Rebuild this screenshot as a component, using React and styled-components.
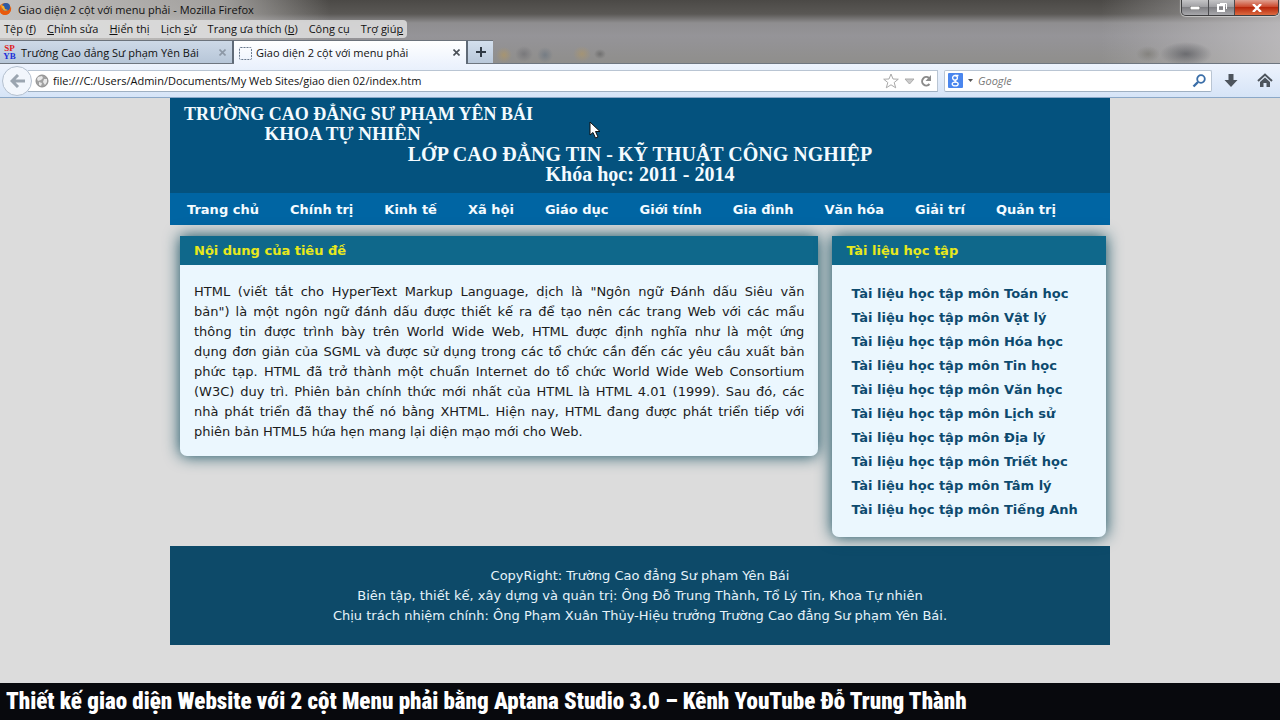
import React, { useState } from "react";
import styled, { createGlobalStyle } from "styled-components";

const MENUS = [
  { before: "Tệp (", key: "f", after: ")" },
  { before: "", key: "C", after: "hỉnh sửa" },
  { before: "", key: "H", after: "iển thị" },
  { before: "Lịch ", key: "s", after: "ử" },
  { before: "Trang ưa thích (", key: "b", after: ")" },
  { before: "Công cụ", key: "", after: "" },
  { before: "Trợ giú", key: "p", after: "" },
];

const NAV_ITEMS = [
  "Trang chủ",
  "Chính trị",
  "Kinh tế",
  "Xã hội",
  "Giáo dục",
  "Giới tính",
  "Gia đình",
  "Văn hóa",
  "Giải trí",
  "Quản trị",
];

const ARTICLE_LINES = [
  'HTML (viết tắt cho HyperText Markup Language, dịch là "Ngôn ngữ Đánh dấu Siêu văn',
  'bản") là một ngôn ngữ đánh dấu được thiết kế ra để tạo nên các trang Web với các mẩu',
  "thông tin được trình bày trên World Wide Web, HTML được định nghĩa như là một ứng",
  "dụng đơn giản của SGML và được sử dụng trong các tổ chức cần đến các yêu cầu xuất bản",
  "phức tạp. HTML đã trở thành một chuẩn Internet do tổ chức World Wide Web Consortium",
  "(W3C) duy trì. Phiên bản chính thức mới nhất của HTML là HTML 4.01 (1999). Sau đó, các",
  "nhà phát triển đã thay thế nó bằng XHTML. Hiện nay, HTML đang được phát triển tiếp với",
  "phiên bản HTML5 hứa hẹn mang lại diện mạo mới cho Web.",
];

const SUBJECTS = [
  "Toán học",
  "Vật lý",
  "Hóa học",
  "Tin học",
  "Văn học",
  "Lịch sử",
  "Địa lý",
  "Triết học",
  "Tâm lý",
  "Tiếng Anh",
];

const GlobalStyle = createGlobalStyle`
  * {
    box-sizing: border-box;
  }
  body {
    margin: 0;
    background: #dcdcdc;
  }
  button,
  input {
    font: inherit;
    color: inherit;
  }
`;

const Window = styled.div`
  display: flex;
  flex-direction: column;
  min-height: 100vh;
`;

// ---------- browser chrome ----------

const Chrome = styled.header`
  font-family: "Open Sans", "Noto Sans", sans-serif;
  font-size: 11px;
  color: #111;
  background:
    radial-gradient(ellipse 26px 12px at 1186px 54px, rgba(70, 72, 78, 0.6), transparent),
    radial-gradient(ellipse 12px 8px at 1148px 54px, rgba(110, 108, 100, 0.5), transparent),
    radial-gradient(ellipse 8px 8px at 504px 55px, rgba(176, 150, 100, 0.7), transparent),
    radial-gradient(ellipse 9px 8px at 524px 54px, rgba(105, 105, 110, 0.6), transparent),
    radial-gradient(ellipse 8px 8px at 545px 55px, rgba(100, 112, 125, 0.6), transparent),
    radial-gradient(ellipse 9px 8px at 582px 54px, rgba(176, 150, 100, 0.6), transparent),
    radial-gradient(ellipse 6px 5px at 600px 54px, rgba(90, 90, 90, 0.6), transparent),
    linear-gradient(90deg, #c2c0be 0, rgba(190, 188, 186, 0.75) 220px, transparent 330px, transparent 86%, rgba(200, 198, 200, 0.7) 100%),
    linear-gradient(180deg, #4b4946 0, #5a5855 14px, #8f8e90 23px, #959498 36px, #8f8e8c 63px);
`;

const TitleBar = styled.div`
  display: flex;
  align-items: flex-start;
  justify-content: space-between;
  height: 20px;
`;

const WindowTitle = styled.div`
  display: flex;
  align-items: center;
  gap: 6px;
  height: 18px;
`;

const WindowButtons = styled.div`
  display: flex;
  margin-right: 1px;
  border: 1px solid #3e3e40;
  border-top: 0;
  border-radius: 0 0 5px 5px;
  box-shadow: 0 0 1px 1px rgba(255, 255, 255, 0.5);
  overflow: hidden;
`;

const WindowButton = styled.button`
  display: flex;
  align-items: center;
  justify-content: center;
  width: ${(props) => (props.$close ? "44px" : "26px")};
  height: 15px;
  padding: 0;
  border: 0;
  border-left: ${(props) => (props.$first ? "0" : "1px solid #4c4c50")};
  background: ${(props) =>
    props.$close
      ? "linear-gradient(#e0a090, #cc4a2e 45%, #b8280c 50%, #dc6a40)"
      : "linear-gradient(#c4c4c6, #a0a0a4 45%, #808084 50%, #a8a8ac)"};
`;

const MenuBar = styled.nav`
  display: flex;
  align-items: center;
  width: fit-content;
  height: 18px;
  padding: 0 4px;
  gap: 11px;
  background: rgba(222, 222, 222, 0.85);
  border-radius: 0 4px 4px 0;
`;

const MenuButton = styled.button`
  padding: 0;
  border: 0;
  background: none;
  line-height: 16px;
  white-space: nowrap;
`;

const TabBar = styled.div`
  display: flex;
  height: 24px;
  margin-top: 2px;
  border-bottom: 1px solid #6e7680;
`;

const Tab = styled.div`
  display: flex;
  align-items: center;
  gap: 4px;
  width: 234px;
  height: ${(props) => (props.$active ? "24px" : "23px")};
  padding: 0 4px 0 2px;
  border-top: 1px solid #6c737c;
  border-right: 2px solid #5f6a77;
  background: ${(props) =>
    props.$active
      ? "linear-gradient(#ffffff, #edf3fd)"
      : "linear-gradient(#cdd9e7, #b7c6d8)"};
`;

const TabLabel = styled.button`
  display: flex;
  flex: 1;
  align-items: center;
  gap: 4px;
  padding: 0;
  border: 0;
  background: none;
  white-space: nowrap;
`;

const SiteMark = styled.span`
  display: grid;
  width: 15px;
  font: bold 9px/8px "Liberation Serif", serif;
  text-align: center;
  color: #e02020;

  b + b {
    color: #2030d8;
  }
`;

const TabClose = styled.button`
  display: flex;
  padding: 2px;
  border: 0;
  background: none;
  color: ${(props) => (props.$muted ? "#8d98a6" : "#4a5058")};
`;

const NewTab = styled.button`
  display: flex;
  align-items: center;
  justify-content: center;
  width: 25px;
  height: 23px;
  padding: 0;
  border: 0;
  border-top: 1px solid #6c737c;
  background: linear-gradient(#d3dfed, #b9c8da);
  color: #2f3944;
`;

const Toolbar = styled.div`
  display: flex;
  align-items: center;
  height: 34px;
  padding: 0 6px 0 2px;
  background: linear-gradient(#edf3fd, #d6e4f7);
  border-bottom: 1px solid #8ba8c8;
`;

const BackButton = styled.button`
  display: flex;
  flex: none;
  align-items: center;
  justify-content: center;
  width: 30px;
  height: 30px;
  padding: 0;
  border: 1px solid #b4c0cf;
  border-radius: 50%;
  background: #f2f6fc;
  z-index: 1;
`;

const Field = styled.div`
  display: flex;
  align-items: center;
  height: 22px;
  background: #fff;
  border: 1px solid #b9c5d3;
  border-bottom-color: #9fb0c2;
`;

const AddressField = styled(Field)`
  flex: 1;
  margin-left: -4px;
  padding: 0 4px 0 7px;
  gap: 4px;
  border-left: 0;
`;

const SearchField = styled(Field)`
  width: 268px;
  margin-left: 6px;
  padding: 0 3px;
  gap: 4px;
  border-radius: 2px;
`;

const TextInput = styled.input`
  flex: 1;
  min-width: 0;
  padding: 0;
  border: 0;
  outline: 0;
  background: none;
  line-height: 16px;

  &::placeholder {
    color: #777;
    font-style: italic;
    opacity: 1;
  }
`;

const IconButton = styled.button`
  display: flex;
  flex: none;
  padding: 0;
  border: 0;
  background: none;
`;

const ToolbarActions = styled.div`
  display: flex;
  gap: 18px;
  margin-left: 12px;
`;

// ---------- web page ----------

const Page = styled.div`
  position: relative;
  flex: 1;
  background: #dcdcdc;
  font-family: Verdana, "DejaVu Sans", sans-serif;
  font-size: 13px;
  line-height: 20px;
  color: #1c1c1c;
`;

const Site = styled.div`
  max-width: 940px;
  margin: 0 auto;
`;

const Banner = styled.div`
  padding: 6px 14px 9px;
  background: #04527e;
  color: #f4fbff;
  font-family: "Liberation Serif", serif;
  font-weight: bold;
`;

const School = styled.div`
  width: fit-content;
  font-size: 18px;
  text-align: center;
`;

const Faculty = styled.div`
  padding-right: 32px;
  font-size: 19px;
`;

const ClassName = styled.h1`
  margin: 0;
  font-size: 20px;
  line-height: 20px;
  text-align: center;
`;

const SiteNav = styled.nav`
  display: flex;
  flex-wrap: wrap;
  gap: 31px;
  padding: 7px 17px 5px;
  background: #0065a3;
`;

const NavLink = styled.a`
  color: #f4fbff;
  font-weight: bold;
  text-decoration: none;
`;

const Columns = styled.main`
  display: grid;
  grid-template-columns: 7fr 3fr;
  align-items: start;
  gap: 14px;
  padding: 11px 4px 9px 10px;
`;

const Panel = styled.section`
  background: #ebf7fe;
  border-radius: 0 0 7px 7px;
  box-shadow: 0 0 16px #0d4a5c;
`;

const PanelTitle = styled.h2`
  margin: 0;
  padding: 5px 14px 4px;
  background: #0f688b;
  color: #e8e81c;
  font-size: 13px;
  line-height: 20px;
`;

const Article = styled.p`
  margin: 0;
  padding: 17px 14px 14px;
`;

const Line = styled.span`
  display: block;
  text-align: justify;
  text-align-last: justify;

  &:last-child {
    text-align-last: left;
  }
`;

const SubjectList = styled.ul`
  margin: 0;
  padding: 17px 19px 15px;
  list-style: none;
  line-height: 24px;
`;

const SubjectLink = styled.a`
  color: #0d4a6e;
  font-weight: bold;
  text-decoration: none;
`;

const Footer = styled.footer`
  padding: 20px 14px 19px;
  background: #0d4a69;
  color: #e6f3fa;
  text-align: center;

  p {
    margin: 0;
  }
`;

const Pointer = styled.svg`
  position: absolute;
  top: 23px;
  left: 46%;
`;

const Caption = styled.div`
  padding: 0 6px;
  background: #08090d;
  color: #fff;
  font: 900 23px/37px "Roboto Condensed", Roboto, sans-serif;
  white-space: nowrap;
`;

const FirefoxIcon = () => (
  <svg width="12" height="14" viewBox="0 0 12 14">
    <circle cx="5" cy="7" r="6" fill="#e66a12" />
    <circle cx="6" cy="5" r="4" fill="#2c5aa6" />
    <path d="M0 4C1 8 3 10 6 9C9 9 10 7 11 5C12 10 8 13 5 13C1 13-1 9 0 4Z" fill="#e8590c" />
    <path d="M1 3L4 4L5 7L8 8C5 10 2 8 1 3Z" fill="#f8b02c" />
  </svg>
);

const CloseIcon = () => (
  <svg width="7" height="7" viewBox="0 0 7 7" stroke="currentColor" strokeWidth="1.6">
    <path d="M0.5 0.5L6.5 6.5M6.5 0.5L0.5 6.5" />
  </svg>
);

const GlobeIcon = () => (
  <svg width="14" height="14" viewBox="0 0 14 14">
    <circle cx="7" cy="7" r="6" fill="#a2a2a2" stroke="#8e8e8e" />
    <path d="M3 3L7 2L8 4L6 6L3 7L2 5ZM9 5L12 5L12 8L10 11L8 8ZM4 8L7 9L6 12L4 11Z" fill="#e8e8e8" />
  </svg>
);

const BrowserChrome = () => {
  const [address, setAddress] = useState(
    "file:///C:/Users/Admin/Documents/My Web Sites/giao dien 02/index.htm"
  );

  return (
    <Chrome>
      <TitleBar>
        <WindowTitle>
          <FirefoxIcon />
          Giao diện 2 cột với menu phải - Mozilla Firefox
        </WindowTitle>
        <WindowButtons>
          <WindowButton $first aria-label="Thu nhỏ">
            <svg width="10" height="4">
              <rect width="10" height="4" rx="1" fill="#fff" stroke="#666" />
            </svg>
          </WindowButton>
          <WindowButton aria-label="Khôi phục">
            <svg width="12" height="11" viewBox="0 0 12 11" fill="none">
              <path d="M4 1.5H10.5V7" stroke="#fff" />
              <rect x="2" y="3" width="6" height="6" stroke="#fff" strokeWidth="2" />
            </svg>
          </WindowButton>
          <WindowButton $close aria-label="Đóng">
            <svg width="10" height="8" viewBox="0 0 10 8" stroke="#fff" strokeWidth="2.4">
              <path d="M1 0L9 8M9 0L1 8" />
            </svg>
          </WindowButton>
        </WindowButtons>
      </TitleBar>
      <MenuBar>
        {MENUS.map((menu) => (
          <MenuButton key={menu.before + menu.key}>
            {menu.before}
            <u>{menu.key}</u>
            {menu.after}
          </MenuButton>
        ))}
      </MenuBar>
      <TabBar>
        <Tab>
          <TabLabel>
            <SiteMark>
              <b>SP</b>
              <b>YB</b>
            </SiteMark>
            Trường Cao đẳng Sư phạm Yên Bái
          </TabLabel>
          <TabClose $muted aria-label="Đóng thẻ">
            <CloseIcon />
          </TabClose>
        </Tab>
        <Tab $active>
          <TabLabel>
            <svg width="16" height="14" viewBox="0 0 16 14">
              <rect x="3.5" y="1.5" width="12" height="12" rx="1" fill="none" stroke="#68788c" strokeDasharray="2 1" />
            </svg>
            Giao diện 2 cột với menu phải
          </TabLabel>
          <TabClose aria-label="Đóng thẻ">
            <CloseIcon />
          </TabClose>
        </Tab>
        <NewTab aria-label="Thẻ mới">
          <svg width="10" height="10" viewBox="0 0 10 10" stroke="currentColor" strokeWidth="2">
            <path d="M5 0V10M0 5H10" />
          </svg>
        </NewTab>
      </TabBar>
      <Toolbar>
        <BackButton aria-label="Quay lại">
          <svg width="15" height="14" viewBox="0 0 15 14" fill="none" stroke="#9ba5b0" strokeWidth="3">
            <path d="M8 1L2 7L8 13M2 7H15" />
          </svg>
        </BackButton>
        <AddressField>
          <GlobeIcon />
          <TextInput
            aria-label="Địa chỉ"
            value={address}
            onChange={(e) => setAddress(e.target.value)}
          />
          <IconButton aria-label="Đánh dấu trang">
            <svg width="16" height="16" viewBox="0 0 16 16" fill="none" stroke="#a9a9a9">
              <path d="M8 1L10 6L15.3 6.2L11.2 9.5L12.7 14.8L8 11.8L3.3 14.8L4.8 9.5L0.7 6.2L6 6Z" />
            </svg>
          </IconButton>
          <IconButton aria-label="Lịch sử địa chỉ">
            <svg width="12" height="16" viewBox="0 0 12 16">
              <path d="M2 6H11L6.5 11Z" fill="#ccc" stroke="#aaa" />
            </svg>
          </IconButton>
          <IconButton aria-label="Tải lại">
            <svg width="14" height="16" viewBox="0 0 14 16" fill="none" stroke="#8b8b8b" strokeWidth="2">
              <path d="M10.5 11A4.2 4.2 0 1 1 10 5" />
              <path d="M12 2V8H6.5Z" fill="#8b8b8b" stroke="none" />
            </svg>
          </IconButton>
        </AddressField>
        <SearchField>
          <svg width="15" height="15" viewBox="0 0 15 15" fill="none" stroke="#fff" strokeWidth="1.3">
            <rect width="15" height="15" rx="1" fill="#4a86ee" stroke="none" />
            <ellipse cx="7" cy="4.8" rx="2.4" ry="2.3" />
            <path d="M7 2.5H10.5M8 7C6 8 7 8.6 8.5 9.3" />
            <ellipse cx="7.2" cy="11" rx="3" ry="1.9" />
          </svg>
          <svg width="7" height="4" viewBox="0 0 7 4">
            <path d="M1 0H6L3.5 3Z" fill="#555" />
          </svg>
          <TextInput aria-label="Tìm kiếm" placeholder="Google" />
          <IconButton aria-label="Tìm">
            <svg width="16" height="14" viewBox="0 0 16 14" fill="none" stroke="#3a6ea8" strokeWidth="1.8">
              <circle cx="9" cy="5" r="3.8" />
              <path d="M6 8L1.5 12.5" strokeWidth="2.4" />
            </svg>
          </IconButton>
        </SearchField>
        <ToolbarActions>
          <IconButton aria-label="Tải xuống">
            <svg width="14" height="16" viewBox="0 0 14 16">
              <path d="M4.5 1H9.5V7H13.5L7 14L0.5 7H4.5Z" fill="#4d545c" />
            </svg>
          </IconButton>
          <IconButton aria-label="Trang chủ">
            <svg width="18" height="16" viewBox="0 0 18 16">
              <path d="M2 8L9 1.5L16 8" fill="none" stroke="#4d545c" strokeWidth="2" />
              <path d="M4 9L9 4.5L14 9V14H10.5V10H7.5V14H4Z" fill="#4d545c" />
            </svg>
          </IconButton>
        </ToolbarActions>
      </Toolbar>
    </Chrome>
  );
};

const App = () => {
  return (
    <Window>
      <GlobalStyle />
      <BrowserChrome />
      <Page>
        <Site>
          <Banner>
            <School>
              <div>TRƯỜNG CAO ĐẲNG SƯ PHẠM YÊN BÁI</div>
              <Faculty>KHOA TỰ NHIÊN</Faculty>
            </School>
            <ClassName>
              LỚP CAO ĐẲNG TIN - KỸ THUẬT CÔNG NGHIỆP
              <br />
              Khóa học: 2011 - 2014
            </ClassName>
          </Banner>
          <SiteNav>
            {NAV_ITEMS.map((item) => (
              <NavLink key={item} href="#">
                {item}
              </NavLink>
            ))}
          </SiteNav>
          <Columns>
            <Panel>
              <PanelTitle>Nội dung của tiêu đề</PanelTitle>
              <Article>
                {ARTICLE_LINES.map((line) => (
                  <Line key={line}>{line} </Line>
                ))}
              </Article>
            </Panel>
            <Panel>
              <PanelTitle>Tài liệu học tập</PanelTitle>
              <SubjectList>
                {SUBJECTS.map((subject) => (
                  <li key={subject}>
                    <SubjectLink href="#">Tài liệu học tập môn {subject}</SubjectLink>
                  </li>
                ))}
              </SubjectList>
            </Panel>
          </Columns>
          <Footer>
            <p>CopyRight: Trường Cao đẳng Sư phạm Yên Bái</p>
            <p>
              Biên tập, thiết kế, xây dựng và quản trị: Ông Đỗ Trung Thành, Tổ
              Lý Tin, Khoa Tự nhiên
            </p>
            <p>
              Chịu trách nhiệm chính: Ông Phạm Xuân Thủy-Hiệu trưởng Trường Cao
              đẳng Sư phạm Yên Bái.
            </p>
          </Footer>
        </Site>
        <Pointer width="12" height="19" viewBox="0 0 12 19">
          <path d="M1 1V14L4 11.5L6.5 17L9 16L6.5 10.5H11Z" fill="#fff" stroke="#111" />
        </Pointer>
      </Page>
      <Caption>
        Thiết kế giao diện Website với 2 cột Menu phải bằng Aptana Studio 3.0 –
        Kênh YouTube Đỗ Trung Thành
      </Caption>
    </Window>
  );
};

export default App;
